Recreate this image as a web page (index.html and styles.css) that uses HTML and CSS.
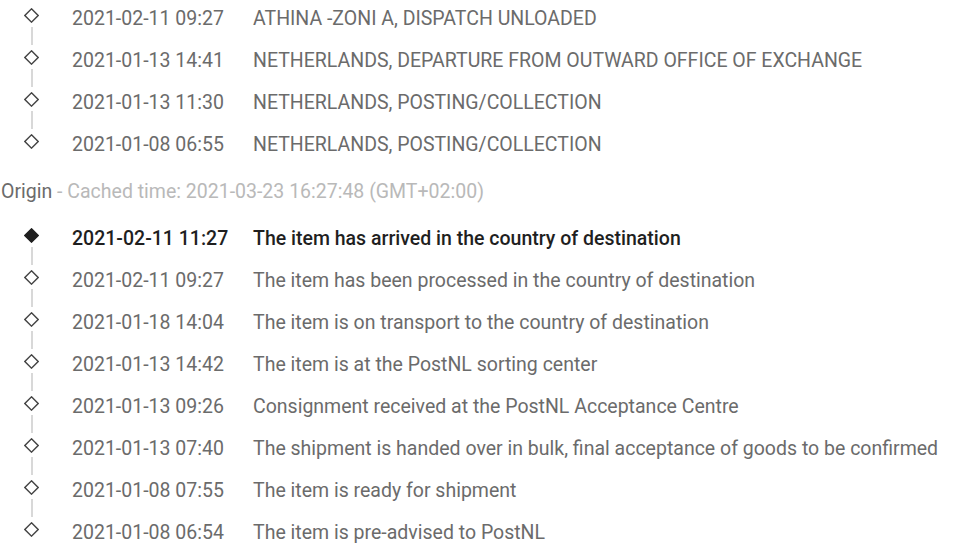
FILE: index.html
```html
<!DOCTYPE html>
<html lang="en">

<head>
    <meta charset="UTF-8">
    <title>Tracking history</title>
    <link rel="stylesheet" href="styles.css">
</head>

<body>
    <main class="tracking">
        <ul class="events">
            <li class="event">
                <span class="marker"><svg viewBox="0 0 14 14"><polygon points="7,0.8 13.2,7 7,13.2 0.8,7" /></svg></span>
                <span class="time">2021-02-11 09:27</span>
                <span class="desc">ATHINA -ZONI A, DISPATCH UNLOADED</span>
            </li>
            <li class="event">
                <span class="marker"><svg viewBox="0 0 14 14"><polygon points="7,0.8 13.2,7 7,13.2 0.8,7" /></svg></span>
                <span class="time">2021-01-13 14:41</span>
                <span class="desc">NETHERLANDS, DEPARTURE FROM OUTWARD OFFICE OF EXCHANGE</span>
            </li>
            <li class="event">
                <span class="marker"><svg viewBox="0 0 14 14"><polygon points="7,0.8 13.2,7 7,13.2 0.8,7" /></svg></span>
                <span class="time">2021-01-13 11:30</span>
                <span class="desc">NETHERLANDS, POSTING/COLLECTION</span>
            </li>
            <li class="event">
                <span class="marker"><svg viewBox="0 0 14 14"><polygon points="7,0.8 13.2,7 7,13.2 0.8,7" /></svg></span>
                <span class="time">2021-01-08 06:55</span>
                <span class="desc">NETHERLANDS, POSTING/COLLECTION</span>
            </li>
        </ul>

        <p class="source"><span class="source-name">Origin</span> - Cached time: 2021-03-23 16:27:48 (GMT+02:00)</p>

        <ul class="events">
            <li class="event current">
                <span class="marker"><svg viewBox="0 0 14 14"><polygon points="7,0.8 13.2,7 7,13.2 0.8,7" /></svg></span>
                <span class="time">2021-02-11 11:27</span>
                <span class="desc">The item has arrived in the country of destination</span>
            </li>
            <li class="event">
                <span class="marker"><svg viewBox="0 0 14 14"><polygon points="7,0.8 13.2,7 7,13.2 0.8,7" /></svg></span>
                <span class="time">2021-02-11 09:27</span>
                <span class="desc">The item has been processed in the country of destination</span>
            </li>
            <li class="event">
                <span class="marker"><svg viewBox="0 0 14 14"><polygon points="7,0.8 13.2,7 7,13.2 0.8,7" /></svg></span>
                <span class="time">2021-01-18 14:04</span>
                <span class="desc">The item is on transport to the country of destination</span>
            </li>
            <li class="event">
                <span class="marker"><svg viewBox="0 0 14 14"><polygon points="7,0.8 13.2,7 7,13.2 0.8,7" /></svg></span>
                <span class="time">2021-01-13 14:42</span>
                <span class="desc">The item is at the PostNL sorting center</span>
            </li>
            <li class="event">
                <span class="marker"><svg viewBox="0 0 14 14"><polygon points="7,0.8 13.2,7 7,13.2 0.8,7" /></svg></span>
                <span class="time">2021-01-13 09:26</span>
                <span class="desc">Consignment received at the PostNL Acceptance Centre</span>
            </li>
            <li class="event">
                <span class="marker"><svg viewBox="0 0 14 14"><polygon points="7,0.8 13.2,7 7,13.2 0.8,7" /></svg></span>
                <span class="time">2021-01-13 07:40</span>
                <span class="desc">The shipment is handed over in bulk, final acceptance of goods to be confirmed</span>
            </li>
            <li class="event">
                <span class="marker"><svg viewBox="0 0 14 14"><polygon points="7,0.8 13.2,7 7,13.2 0.8,7" /></svg></span>
                <span class="time">2021-01-08 07:55</span>
                <span class="desc">The item is ready for shipment</span>
            </li>
            <li class="event">
                <span class="marker"><svg viewBox="0 0 14 14"><polygon points="7,0.8 13.2,7 7,13.2 0.8,7" /></svg></span>
                <span class="time">2021-01-08 06:54</span>
                <span class="desc">The item is pre-advised to PostNL</span>
            </li>
        </ul>
    </main>
</body>

</html>
```

FILE: styles.css
```css
:root {
    --text: #6b6b6b;
    --strong: #1f1f1f;
    --muted: #b9b9b9;
    --line: #d8d8d8;
    --icon: #444444;
}

body {
    font-family: Roboto, "Liberation Sans", sans-serif;
    font-size: 19.5px;
    margin: 0;
    padding: 0;
    background-color: #ffffff;
    color: var(--text);
}

.tracking {
    padding: 0 0 0 1px;
}

.events {
    list-style-type: none;
    margin: 0;
    padding: 0;
}

.event {
    position: relative;
    display: flex;
    align-items: flex-start;
    height: 42px;
    box-sizing: border-box;
    padding-top: 7px;
    line-height: 24px;
}

/* dashed connector between markers */
.event:not(:last-child)::after {
    content: "";
    position: absolute;
    left: 30px;
    top: 27px;
    width: 2px;
    height: 18px;
    background-color: var(--line);
}

.marker {
    width: 71px;
    flex-shrink: 0;
    padding-left: 23px;
    box-sizing: border-box;
}

.marker svg {
    display: block;
    width: 15px;
    height: 15px;
    margin-top: 1px;
}

.marker polygon {
    fill: #ffffff;
    stroke: var(--icon);
    stroke-width: 1.3;
}

.time {
    width: 181px;
    flex-shrink: 0;
}

.current {
    color: var(--strong);
    font-weight: 500;
}

.current .marker polygon {
    fill: var(--strong);
    stroke: var(--strong);
}

.source {
    margin: 12px 0 16px;
    line-height: 24px;
    color: var(--muted);
}

.source-name {
    color: var(--text);
}
```
